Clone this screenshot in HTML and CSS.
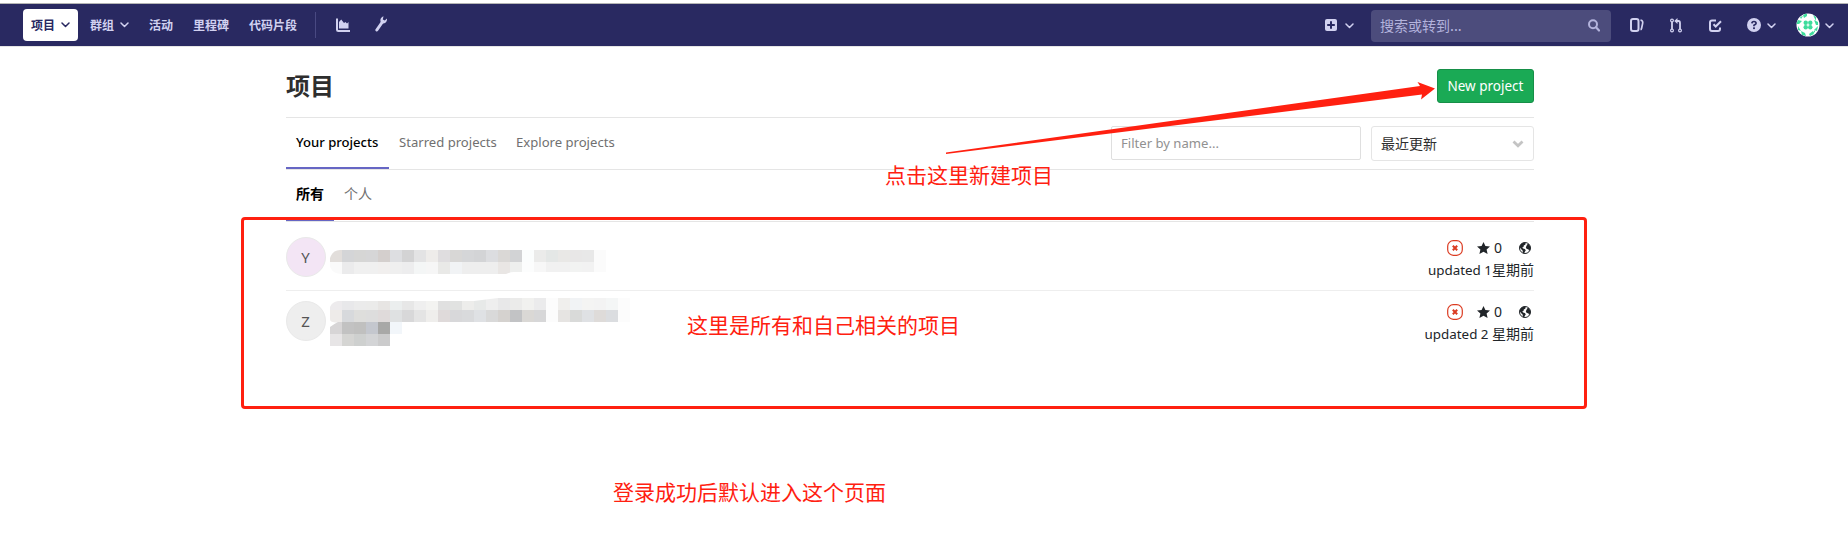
FILE: index.html
```
<!DOCTYPE html>
<html lang="zh-CN">
<head>
<meta charset="utf-8">
<title>项目</title>
<link rel="stylesheet" href="styles.css">
</head>
<body>
<svg width="0" height="0" class="defs">
  <symbol id="chev" viewBox="0 0 9 6"><path d="M1 1l3.500 3.500L8 1" fill="none" stroke="currentColor" stroke-width="1.500" stroke-linecap="round" stroke-linejoin="round"/></symbol>
  <symbol id="status" viewBox="0 0 16 16"><rect x=".7" y=".7" width="14.600" height="14.600" rx="5.600" fill="none" stroke="#db3b21" stroke-width="1.200"/><path d="M5.800 5.800l4.400 4.400M10.200 5.800l-4.400 4.400" stroke="#db3b21" stroke-width="2"/></symbol>
  <symbol id="star" viewBox="0 0 13 12"><path d="M6.500 0l1.900 4 4.600.5-3.400 3 1 4.500-4.100-2.300L2.400 12l1-4.500L0 4.500 4.600 4z" fill="#212529"/></symbol>
  <symbol id="globe" viewBox="0 0 12 12"><circle cx="6" cy="6" r="5.500" fill="#fff" stroke="#212529"/><path d="M.6 5C1 2.500 3 .7 5.500.6l1.300.8-.6 1.300-1.400.8-.3 1.400-1.300.6.9 1 1.700.5 1 1.300-.9 1.500-.8 1.600-1.200-.5-.3-2.400L2 7zM8 2.600l1.600-.8 1.500 2.400.3 2.800-1.200 2-.9-1.800-1.600-.3-.9-1.700.8-1.400z" fill="#212529"/></symbol>
</svg>
<header class="navbar">
  <nav class="nav-left">
    <a class="nav-item active">项目<svg class="chev"><use href="#chev"/></svg></a>
    <a class="nav-item">群组<svg class="chev"><use href="#chev"/></svg></a>
    <a class="nav-item">活动</a>
    <a class="nav-item">里程碑</a>
    <a class="nav-item">代码片段</a>
    <span class="nav-sep"></span>
    <svg class="i-chart" width="14" height="14" viewBox="0 0 14 14"><path d="M1 .5v11.200q0 1.300 1.300 1.300H14" fill="none" stroke="currentColor" stroke-width="2"/><path d="M3 10.500V4l2.200-2.500L8 5l1.500-1L11 5.500 12.500 4v6.500z" fill="currentColor"/></svg>
    <svg class="i-wrench" width="12" height="16" viewBox="0 0 12 16"><path d="M1.800 14L7 6.500" stroke="currentColor" stroke-width="3" stroke-linecap="round"/><path d="M8.500.3L7.800 3.400l2 1.200L12 2.500c.3 3-1.500 5.200-4.500 5C4.500 6.500 4.500 1.500 8.500.3z" fill="currentColor"/></svg>
  </nav>
  <div class="nav-right">
    <svg class="i-plus" width="12" height="12" viewBox="0 0 12 12"><rect width="12" height="12" rx="2" fill="currentColor"/><path d="M6 2.200v7.600M2.200 6h7.600" stroke="#292961" stroke-width="2"/></svg>
    <svg class="chev c-plus"><use href="#chev"/></svg>
    <div class="search"><span>搜索或转到...</span><svg width="12" height="13" viewBox="0 0 12 13"><circle cx="5" cy="5.200" r="4" fill="none" stroke="currentColor" stroke-width="2"/><path d="M8 8.200l3 3.300" stroke="currentColor" stroke-width="2.200" stroke-linecap="round"/></svg></div>
    <svg class="i-issues" width="14" height="14" viewBox="0 0 14 14"><rect x="1" y="1" width="7.500" height="12" rx="2" fill="none" stroke="currentColor" stroke-width="2"/><path d="M10.500 2.200c2.200.3 2.500 1.500 2.100 3.500l-1 4.500q-.3 1.300-1.100 1.500" fill="none" stroke="currentColor" stroke-width="1.700"/></svg>
    <svg class="i-mr" width="12" height="15" viewBox="0 0 12 15"><g fill="none" stroke="currentColor"><path d="M2 4v7M6 3h2.500Q10 3 10 5v6" stroke-width="1.800"/><circle cx="2" cy="2.500" r="1.400" stroke-width="1.200"/><circle cx="2" cy="12.500" r="1.400" stroke-width="1.200"/><circle cx="10" cy="12.500" r="1.400" stroke-width="1.200"/></g><path d="M7.500 0v6L4.200 3z" fill="currentColor"/></svg>
    <svg class="i-todo" width="13" height="13" viewBox="0 0 13 13"><g fill="none" stroke="currentColor" stroke-width="2"><path d="M7 1.500H3q-2 0-2 2V10q0 2 2 2h6q2 0 2-2V8.500"/><path d="M4.500 5.200l2.200 2.300L12 2.200"/></g></svg>
    <svg class="i-help" width="14" height="14" viewBox="0 0 14 14"><circle cx="7" cy="7" r="7" fill="currentColor"/><path d="M4.900 5.400Q5 3.500 7 3.500t2.100 1.700Q9.100 6.300 7 7.300v1" fill="none" stroke="#292961" stroke-width="1.700"/><rect x="6.100" y="9.300" width="1.800" height="1.800" fill="#292961"/></svg>
    <svg class="chev c-help"><use href="#chev"/></svg>
    <svg class="i-avatar" width="24" height="24" viewBox="0 0 24 24"><defs><clipPath id="round"><circle cx="12" cy="12" r="11.500"/></clipPath></defs><circle cx="12" cy="12" r="11.500" fill="#fff"/><g fill="#3ddc9c" clip-path="url(#round)"><circle cx="9.700" cy="9.700" r="2.200"/><circle cx="14.300" cy="9.700" r="2.200"/><circle cx="9.700" cy="14.300" r="2.200"/><circle cx="14.300" cy="14.300" r="2.200"/><path d="M7 2l4-2v3L8 5zM17 2l3 2v4zM2 7l4 1-3 3H0zM18 7l4 2v3h-2zM2 13l3 5-3-1zM22 13l-1 5-3-1zM5 18l4 2 1 3-4-1zM13 21l4-3 1 3-4 2zM4 4l3-1-2 3zM19 19l-3 2 3-4z"/></g></svg>
    <svg class="chev c-user"><use href="#chev"/></svg>
  </div>
</header>
<main class="content">
  <div class="title-row"><h1>项目</h1><a class="btn-new">New project</a></div>
  <div class="tabs-row">
    <a class="tab t1 on">Your projects</a><a class="tab t2">Starred projects</a><a class="tab t3">Explore projects</a>
    <div class="filters">
      <div class="filter"><span>Filter by name...</span></div>
      <div class="select"><span>最近更新</span><svg width="12" height="8" viewBox="0 0 12 8"><path d="M1.500 1.500L6 5.800l4.500-4.300" fill="none" stroke="#c4c4c4" stroke-width="2.800"/></svg></div>
    </div>
  </div>
  <div class="subtabs"><a class="subtab on">所有</a><a class="subtab">个人</a></div>
  <ul class="projects">
    <li class="project">
      <span class="avatar pink">Y</span>
      <svg class="mosaic" data-mosaic="first" width="300" height="48"><clipPath id="first"><path d="M14 13H300V35H188Q184 35 180 37H16Q4 37 3 25Q5 13 14 13z"/></clipPath></svg>
      <div class="meta"><div class="stats"><svg width="16" height="16"><use href="#status"/></svg><svg class="star" width="13" height="12"><use href="#star"/></svg><span>0</span><svg class="globe" width="12" height="12"><use href="#globe"/></svg></div><div class="updated">updated 1<span class="zh">星期前</span></div></div>
    </li>
    <li class="project">
      <span class="avatar grey">Z</span>
      <svg class="mosaic" data-mosaic="second" width="310" height="50"><clipPath id="second"><path d="M12 0H148L172 -3H310V21H76V45H4V26Q8 23 12 21Q4 22 4 18V6Q6 1 12 0z"/></clipPath></svg>
      <div class="meta"><div class="stats"><svg width="16" height="16"><use href="#status"/></svg><svg class="star" width="13" height="12"><use href="#star"/></svg><span>0</span><svg class="globe" width="12" height="12"><use href="#globe"/></svg></div><div class="updated">updated 2 <span class="zh">星期前</span></div></div>
    </li>
  </ul>
</main>
<div class="frame"></div>
<svg class="arrow" width="1848" height="554"><path d="M946 152.500L1420 86 1417.500 82 1435 88.500 1421 99.500 1422 94.500 946 154z" fill="#ff2010"/></svg>
<p class="note n1">点击这里新建项目</p>
<p class="note n2">这里是所有和自己相关的项目</p>
<p class="note n3">登录成功后默认进入这个页面</p>
<script src="mosaic.js"></script>
</body>
</html>
```
FILE: styles.css
```
* { box-sizing: border-box; }
body { margin: 0; height: 554px; padding-top: 3px; overflow: hidden; background: #fff; position: relative; color: #2e2e2e; font: 14px/20px "Noto Sans", "Noto Sans CJK SC", sans-serif; }
.defs { position: absolute; }
.navbar { height: 44px; border-top: 1px solid #b5b5b5; border-bottom: 1px solid #e5e5e5; background: #292961; color: #d1d1f0; display: flex; justify-content: space-between; }
.nav-left, .nav-right { display: flex; align-items: center; height: 42px; }
.nav-left { padding-left: 23px; }
.nav-item { display: flex; align-items: center; height: 32px; padding: 0 8px 1px; font: bold 12px/31px "Noto Sans CJK SC", sans-serif; margin-right: 4px; }
.nav-item.active { background: #fff; color: #292961; border-radius: 4px; }
.nav-item .chev { margin: 1px 0 0 6px; }
.chev { width: 9px; height: 6px; flex: none; }
.nav-sep { width: 1px; height: 26px; background: #494982; margin: 0 20px 0 6px; }
.i-chart { margin-bottom: 1px; }
.i-wrench { margin: 0 0 2px 25px; }
.nav-right { padding-right: 13px; }
.i-plus { margin-right: 1px; }
.c-plus { margin: 2px 17px 0 7px; }
.search { width: 240px; height: 32px; margin-top: 1px; padding: 0 11px 1px 9px; border-radius: 4px; background: #4c4c7c; color: #b3b3dc; display: flex; align-items: center; justify-content: space-between; font: 14px/31px "Noto Sans CJK SC", sans-serif; }
.i-issues { margin-left: 19px; }
.i-mr { margin-left: 26px; }
.i-todo { margin-left: 27px; }
.i-help { margin-left: 25px; }
.c-help { margin: 2px 20px 0 6px; }
.c-user { margin: 2px 1px 0 5px; }
.content { width: 1248px; margin-left: 286px; }
.title-row { height: 71px; border-bottom: 1px solid #e5e5e5; display: flex; justify-content: space-between; padding-top: 22px; }
h1 { margin: -1px 0 0; font: bold 24px/34px "Noto Sans CJK SC", sans-serif; }
.btn-new { width: 97px; height: 34px; border: 1px solid #168f48; border-radius: 3px; background: #1aaa55; color: #fff; text-align: center; line-height: 32px; font-size: 13.500px; }
.tabs-row { height: 52px; border-bottom: 1px solid #e5e5e5; display: flex; }
.tab { height: 51px; padding: 14px 10px 0; font-size: 13.100px; line-height: 20px; color: #707070; white-space: nowrap; }
.tab.on { color: #000; font-weight: 500; border-bottom: 2px solid #6666c4; }
.t1 { width: 103px; }
.t2 { width: 117px; }
.filters { margin-left: auto; display: flex; gap: 10px; padding-top: 8px; }
.filter { width: 250px; height: 34px; border: 1px solid #dfdfdf; border-radius: 2px; padding-left: 9px; color: #919191; font-size: 13.100px; line-height: 32px; }
.select { width: 163px; height: 35px; border: 1px solid #e5e5e5; border-radius: 3px; padding: 0 9px 0 9px; display: flex; align-items: center; justify-content: space-between; font-family: "Noto Sans CJK SC", sans-serif; }
.select span { margin-top: -2px; }
.subtabs { height: 52px; border-bottom: 1px solid #e5e5e5; display: flex; }
.subtab { height: 51px; padding: 13px 10px 0; color: #707070; font-family: "Noto Sans CJK SC", sans-serif; }
.subtab.on { color: #000; font-weight: bold; border-bottom: 2px solid #6666c4; }
.projects { list-style: none; margin: 0; padding: 5px 0 0; }
.project { height: 64px; padding-top: 10px; display: flex; border-bottom: 1px solid #eee; }
.project:last-child { border-bottom: 0; }
.avatar { width: 40px; height: 40px; border-radius: 50%; border: 1px solid #e9e9e9; padding-right: 1px; text-align: center; line-height: 39px; font-size: 15px; color: #555; flex: none; }
.pink { background: #f3e5f5; }
.grey { background: #eee; }
.mosaic { flex: none; overflow: visible; }
.meta { margin-left: auto; text-align: right; color: #212529; }
.stats { display: flex; align-items: center; justify-content: flex-end; height: 20px; padding: 2px 3px 0 0; }
.star { margin: 0 4px 0 14px; }
.globe { margin-left: 17px; }
.updated { line-height: 20px; margin-top: 2px; font-size: 13.400px; white-space: nowrap; }
.zh { font: 14px/20px "Noto Sans CJK SC", sans-serif; }
.frame { position: absolute; left: 241px; top: 217px; width: 1346px; height: 192px; border: 3px solid #ff2010; border-radius: 4px; }
.arrow { position: absolute; left: 0; top: 0; }
.note { position: absolute; margin: 0; color: #ff2010; font: 400 21px/30px "Noto Sans CJK SC", sans-serif; white-space: nowrap; }
.n1 { left: 885px; top: 159px; }
.n2 { left: 687px; top: 309px; }
.n3 { left: 613px; top: 476px; }
```
FILE: mosaic.js
```
var NS = "http://www.w3.org/2000/svg";
var blocks = {
  first: [
    { y: 13, h: 12, c: "e2dedb d4d5d7 d6d6d5 d6d6d7 d4cfcd dddee1 d3d3d4 e3e3e4 eeecea dfdddf d8d7d6 d5d6d8 d3d4d6 dcdde0 dad8d6 d2d3d5 fbfdfd ebebea e4e7e6 e9e8e6 e8e7e7 e8e8e8 fbfbfb" },
    { y: 25, h: 12, c: "fafafa ebebec f0f0f0 f0f0f0 f1efee efefef ededee f4f6f6 f6f6f6 e9e9e7 f1f3f5 eeeeee eeeeee eeeeee e9e6e4 eeefee fcfdfd f7f7f7 f1f1f1 f1f1f1 f2f3f2 f2f2f2 fbfbfb" }
  ],
  second: [
    { y: -3, h: 12, c: "edebed e8e8ea ebebeb ebebea e7e5e3 ebeeee e7e7e7 efefef f3f3f1 e0e0e0 e1e2e1 ededeb e7e9e8 eeeeee e8e8e9 ebebea f1f1ef ebebec fcfcfc f0efed f1f3f5 f4f4f3 f3f3f3 f4f6f6 fcfcfc" },
    { y: 9, h: 12, c: "eeebe9 d7d9dc dededc dddddd dfdada dfe1e2 d8d8d9 e4e4e4 efeeec dfdada d8d8da d9dadc dfe1e4 d9d9d9 d5d2cf c2c3c5 dad8d5 d7d7d8 fcfcfc e6e4e2 d9dad9 dfe1e4 dedbd9 dbdde0 fcfcfc" },
    { y: 21, h: 12, c: "d7d5d6 c2c2c2 c0c0bf c4c7ce a8a8a7 f2f6fa" },
    { y: 33, h: 12, c: "e7e5e6 d5d5d3 ced0cf d3d4d6 cbcbcc" }
  ]
};
document.querySelectorAll("[data-mosaic]").forEach(function (svg) {
  var group = document.createElementNS(NS, "g");
  group.setAttribute("clip-path", "url(#" + svg.dataset.mosaic + ")");
  svg.appendChild(group);
  blocks[svg.dataset.mosaic].forEach(function (row) {
    row.c.split(" ").forEach(function (color, i) {
      var r = document.createElementNS(NS, "rect");
      r.setAttribute("x", 4 + i * 12);
      r.setAttribute("y", row.y);
      r.setAttribute("width", 12);
      r.setAttribute("height", row.h);
      r.setAttribute("fill", "#" + color);
      group.appendChild(r);
    });
  });
});
```
